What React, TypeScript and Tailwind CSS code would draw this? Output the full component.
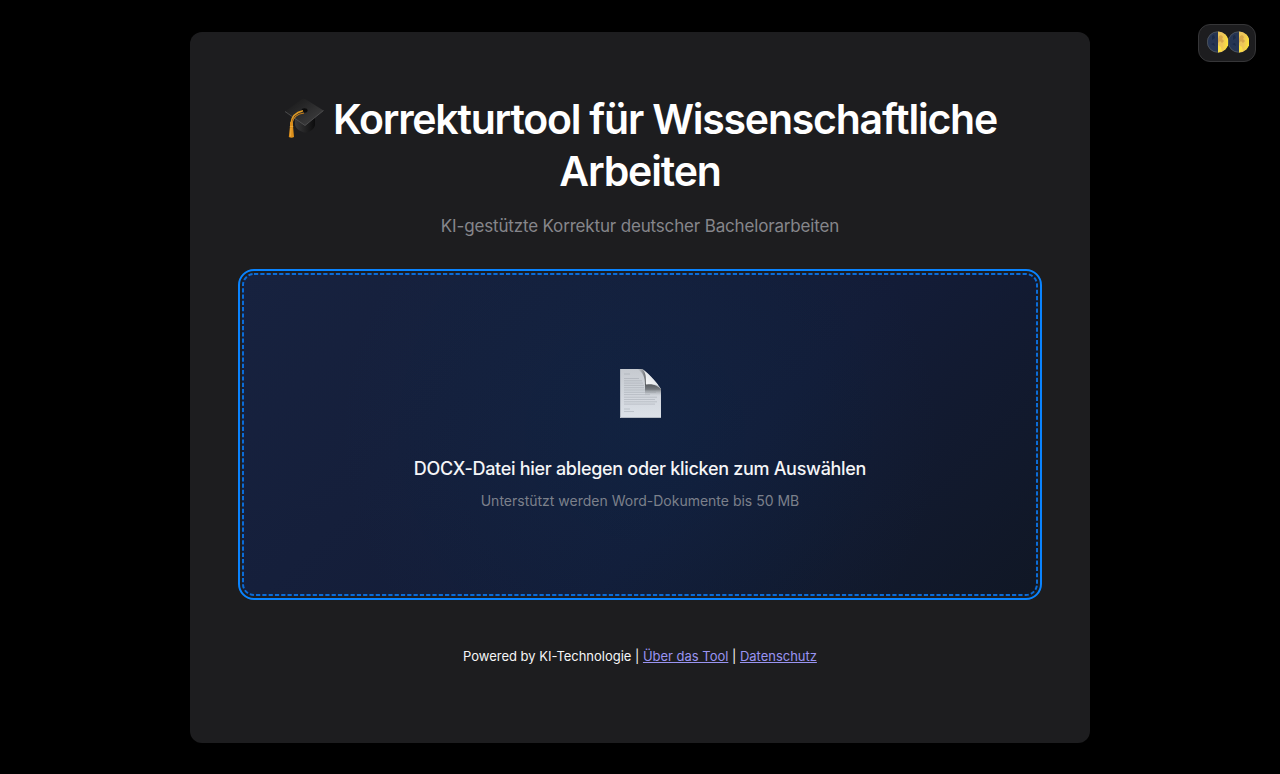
function GraduationCap() {
  return (
    <svg width="42" height="42" viewBox="0 0 42 42" className="shrink-0" aria-hidden="true">
      <defs>
        <linearGradient id="capTop" x1="0" y1="0" x2="1" y2="1">
          <stop offset="0" stopColor="#161617" />
          <stop offset="1" stopColor="#434344" />
        </linearGradient>
        <linearGradient id="capBase" x1="0" y1="0" x2="1" y2="0">
          <stop offset="0" stopColor="#3a3a3b" />
          <stop offset="1" stopColor="#0c0c0d" />
        </linearGradient>
      </defs>
      <path d="M12 18 L32 19 V27 C31 32 25 35 21 34.5 C16 33 12 30 12 26Z" fill="url(#capBase)" />
      <path d="M2 13.5 L19 1 Q21 0.5 23 1.5 L40.5 12.5 L22 27.5Z" fill="url(#capTop)" />
      <path d="M2 13.5 L22 27.5 L40.5 12.5" fill="none" stroke="#555557" strokeWidth="0.8" />
      <ellipse cx="21.5" cy="12.5" rx="3" ry="2.2" fill="#0b0b0c" />
      <path d="M20 12.8 C13 14.5 8.6 18 8 25" fill="none" stroke="#e09a24" strokeWidth="1.5" />
      <path d="M21 15 C14 16 10 20 9 25" fill="none" stroke="#c9811a" strokeWidth="1.2" />
      <path d="M7 24.5 Q8.5 23 10 24.5 L10 28 L11 39 Q8.5 40.5 5.8 39 L7 28Z" fill="#dc8f1b" />
      <path d="M6.8 28.4 H10.3 M8 30 L7.5 38.5" stroke="#f3b64b" strokeWidth="0.7" />
    </svg>
  );
}

function DocumentPage() {
  return (
    <svg width="42" height="49" viewBox="0 0 42 49" className="ml-px block" aria-hidden="true">
      <defs>
        <linearGradient id="sheet" x1="0" y1="0" x2="0" y2="1">
          <stop offset="0" stopColor="#c6cad0" />
          <stop offset="1" stopColor="#dce1e8" />
        </linearGradient>
        <linearGradient id="foldShade" x1="0" y1="0" x2="1" y2="0">
          <stop offset="0" stopColor="#8d9094" stopOpacity="0" />
          <stop offset="1" stopColor="#505356" />
        </linearGradient>
        <linearGradient id="underFold" x1="0" y1="0" x2="0" y2="1">
          <stop offset="0" stopColor="#56595d" />
          <stop offset="0.45" stopColor="#777b80" />
          <stop offset="1" stopColor="#b9bdc3" stopOpacity="0" />
        </linearGradient>
        <linearGradient id="fold" x1="0" y1="1" x2="1" y2="0">
          <stop offset="0" stopColor="#fbfcfd" />
          <stop offset="1" stopColor="#d5d8dc" />
        </linearGradient>
      </defs>
      <path d="M0 0 H22 C26 2 36 12 41 20 V49 H0Z" fill="url(#sheet)" />
      <g stroke="#8e949d" strokeWidth="0.8" opacity="0.45">
        <path d="M4 5 H10 M4 9.5 H19 M4 11.8 H22 M4 14.1 H23 M4 16.4 H24 M4 18.7 H24 M4 21 H36" />
        <path d="M4 23.3 H36 M4 25.6 H30 M4 28.2 H37 M4 30.5 H35 M4 32.8 H37 M4 35.1 H35" />
        <path d="M4 40 H10 M4 42.5 H14" />
      </g>
      <path d="M17 0 H22 C24 1 26 3 27 5 V16 H25 C25 8 23 3 17 0Z" fill="url(#foldShade)" />
      <path d="M25 15 C31 14 37 16 41 20 V27 H25Z" fill="url(#underFold)" />
      <path d="M22 0 C26 3 33 9 38 16 C34 15 30 15 26 15.5 C26 8 26 3 22 0Z" fill="url(#fold)" />
      <path d="M0.5 0 V48.5 H41" fill="none" stroke="#aab0ba" strokeWidth="0.8" />
    </svg>
  );
}

function HalfMoon() {
  return (
    <svg width="21" height="22" viewBox="0 0 21 22" className="block" aria-hidden="true">
      <defs>
        <linearGradient id="moonLit" x1="0" y1="0" x2="1" y2="0.2">
          <stop offset="0" stopColor="#ecc85c" />
          <stop offset="0.5" stopColor="#eec558" />
          <stop offset="1" stopColor="#fce23c" />
        </linearGradient>
      </defs>
      <circle cx="10.5" cy="11" r="10.5" fill="#263553" />
      <circle cx="10.5" cy="11" r="10.2" fill="none" stroke="#5a5e60" strokeWidth="0.7" />
      <path d="M11 0.5 A10.5 10.5 0 0 1 11 21.5Z" fill="url(#moonLit)" />
      <path d="M12 5 L14 4 L16 6 L15 8 L17 10 L15 12 L13 10 L11 12 V8Z" fill="#c9933f" opacity="0.6" />
      <path d="M11 14 L14 16 L15 20 L11 21.5Z" fill="#ffe63f" opacity="0.8" />
      <path d="M5 5 L7 4 L8 7 L5 9Z M4 13 L7 12 L8 15Z" fill="#1a2945" />
    </svg>
  );
}

export default function App() {
  return (
    <div className="relative flex h-[774px] w-full justify-center overflow-hidden bg-black pt-8 font-['Inter','Liberation_Sans',sans-serif]">
      <main className="flex h-[710.5px] w-[900px] flex-col rounded-xl bg-[#1d1d1f] px-12 pt-[61px] text-center">
        <h1 className="flex flex-col items-center text-[41px] leading-[52px] font-semibold text-white">
          <span className="flex h-[52px] items-center gap-[8px] whitespace-nowrap">
            <GraduationCap />
            <span className="tracking-[-1.22px]">Korrekturtool für Wissenschaftliche</span>
          </span>
          <span className="tracking-[-1.15px]">Arbeiten</span>
        </h1>
        <p className="mt-[15px] text-[17px] leading-7 tracking-[-0.16px] text-[#86868b]">
          KI-gestützte Korrektur deutscher Bachelorarbeiten
        </p>

        <button
          type="button"
          className="mt-[29px] h-[331px] w-full shrink-0 rounded-[16px] border-2 border-[#0a84ff] p-[2px]"
        >
          <span className="relative flex h-full w-full flex-col items-center rounded-[12px] bg-[radial-gradient(circle_at_center,rgba(0,70,120,0.12),transparent_70%),linear-gradient(135deg,#17223f,#131c37_60%,#101725)] pt-[96px]">
            <svg className="absolute inset-0 h-full w-full" viewBox="0 0 796 323" aria-hidden="true">
              <rect x="1" y="1" width="794" height="321" rx="11" fill="none" stroke="#0b6cd8" strokeWidth="2" strokeDasharray="4.2 2.1" />
            </svg>
            <DocumentPage />
            <span className="mt-[37px] text-[18px] leading-7 font-medium tracking-[-0.3px] text-[#f5f5f7]">
              DOCX-Datei hier ablegen oder klicken zum Auswählen
            </span>
            <span className="mt-[8px] text-[14px] leading-5 text-[#7c808b]">
              Unterstützt werden Word-Dokumente bis 50 MB
            </span>
          </span>
        </button>

        <footer className="mt-[46px] text-[13px] leading-5 tracking-[-0.02px] text-[#f5f5f7]">
          Powered by KI-Technologie |{" "}
          <a href="#about" className="text-[#9a94f2] underline">Über das Tool</a> |{" "}
          <a href="#privacy" className="text-[#9a94f2] underline">Datenschutz</a>
        </footer>
      </main>

      <button
        type="button"
        aria-label="Farbschema"
        className="absolute top-6 right-6 flex h-[38px] w-[58px] items-center justify-center rounded-xl border border-[#363638] bg-[#1d1d1f] pb-[2px] pl-[2px]"
      >
        <HalfMoon />
        <HalfMoon />
      </button>
    </div>
  );
}
